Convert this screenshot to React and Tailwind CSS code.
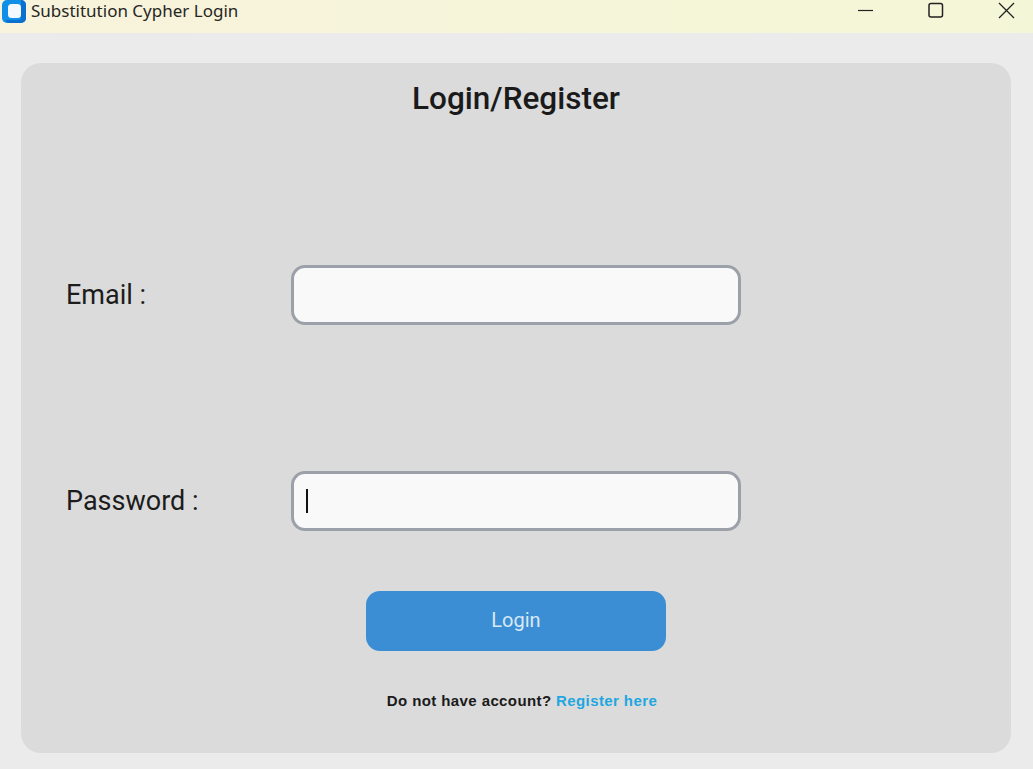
import React from 'react';

function AppIcon() {
  return (
    <svg width="24" height="23" viewBox="0 0 24 23" className="shrink-0">
      <rect x="0" y="0" width="24" height="23" rx="5" fill="#0f8fe8" />
      <path d="M19 0h0a5 5 0 0 1 5 5v13a5 5 0 0 1-5 5H8a5 5 0 0 1-5-3h13a3 3 0 0 0 3-3z" fill="#0b6fd0" />
      <rect x="6" y="4" width="13" height="14" rx="3.5" fill="#f2f8fd" />
    </svg>
  );
}

function TitleBar() {
  return (
    <div className="h-[33px] flex items-start pl-[2px] bg-gradient-to-r from-[#f8f3dc] to-[#f4f7d7]">
      <div className="flex items-center h-[22px] gap-[5px]">
        <AppIcon />
        <span className="font-['Noto_Sans',sans-serif] text-[17px] leading-[22px] text-[#26261f]">Substitution Cypher Login</span>
      </div>
      <div className="ml-auto flex items-start">
        <svg width="16" height="20" viewBox="0 0 16 20" className="mr-[54px]">
          <path d="M0 10.5h15" stroke="#222" strokeWidth="1.2" />
        </svg>
        <svg width="16" height="20" viewBox="0 0 16 20" className="mr-[54px]">
          <rect x="1" y="3.5" width="13.5" height="13.5" rx="2" fill="none" stroke="#222" strokeWidth="1.5" />
        </svg>
        <svg width="17" height="20" viewBox="0 0 17 20" className="mr-[18px]">
          <path d="M1 3l15 15M16 3L1 18" stroke="#222" strokeWidth="1.3" fill="none" />
        </svg>
      </div>
    </div>
  );
}

function Field({ label, caret, className }) {
  return (
    <div className={`flex items-center h-[60px] ${className}`}>
      <label className="w-[225px] text-[27px] text-[#1c1c1c]">{label}</label>
      <div className="w-[450px] h-[60px] flex items-center pl-[12px] rounded-[14px] border-[3px] border-[#9ca1a9] bg-[#f9f9fa]">
        {caret && <div className="w-[2px] h-[24px] bg-[#111]" />}
      </div>
    </div>
  );
}

export default function App() {
  return (
    <div className="h-[769px] overflow-hidden bg-[#ebebeb] font-['Roboto',sans-serif]">
      <TitleBar />
      <div className="mx-[21px] mt-[30px] h-[690px] w-[990px] rounded-[20px] bg-[#dbdbdb] flex flex-col">
        <h1 className="mt-[16px] text-center text-[31.5px] leading-[40px] font-medium text-[#1a1a1a]">Login/Register</h1>
        <div className="pl-[45px]">
          <Field label="Email :" className="mt-[146px]" />
          <Field label="Password :" caret className="mt-[146px]" />
        </div>
        <button className="self-center mt-[60px] w-[300px] h-[60px] pb-[2px] rounded-[14px] bg-[#3b8ed4] text-[20px] text-[#d9e8f5]">
          Login
        </button>
        <p className="mt-[40px] pl-[12px] text-center font-['Liberation_Sans',sans-serif] text-[15px] leading-[20px] font-bold tracking-[0.4px] text-[#1a1a1a]">
          Do not have account? <a className="text-[#1ea7e0]">Register here</a>
        </p>
      </div>
    </div>
  );
}
